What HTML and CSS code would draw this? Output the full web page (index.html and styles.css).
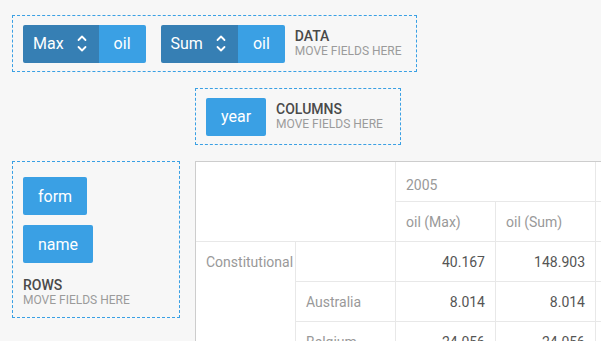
FILE: index.html
```html
<!DOCTYPE html>
<html lang="en">
    <head>
        <meta charset="UTF-8">
        <meta name="viewport" content="width=device-width, initial-scale=1.0">
        <title>Pivot</title>
        <link rel="stylesheet" href="styles.css">
    </head>
    <body>
        <div class="pivot">
            <div class="zone data-zone">
                <div class="field">
                    <span class="agg">Max
                        <svg class="arrows" width="10" height="17" viewBox="0 0 10 17"><polyline points="1.5,5 5,1.5 8.5,5"/><polyline points="1.5,12 5,15.5 8.5,12"/></svg>
                    </span>
                    <span class="name">oil</span>
                </div>
                <div class="field">
                    <span class="agg">Sum
                        <svg class="arrows" width="10" height="17" viewBox="0 0 10 17"><polyline points="1.5,5 5,1.5 8.5,5"/><polyline points="1.5,12 5,15.5 8.5,12"/></svg>
                    </span>
                    <span class="name">oil</span>
                </div>
                <div class="label">
                    <b>DATA</b>
                    <span>MOVE FIELDS HERE</span>
                </div>
            </div>

            <div class="middle">
                <div class="zone cols-zone">
                    <div class="field"><span class="name">year</span></div>
                    <div class="label">
                        <b>COLUMNS</b>
                        <span>MOVE FIELDS HERE</span>
                    </div>
                </div>
            </div>

            <div class="bottom">
                <div class="zone rows-zone">
                    <div class="field"><span class="name">form</span></div>
                    <div class="field"><span class="name">name</span></div>
                    <div class="label">
                        <b>ROWS</b>
                        <span>MOVE FIELDS HERE</span>
                    </div>
                </div>

                <table class="grid">
                    <tr class="head">
                        <td class="corner" colspan="2" rowspan="2"></td>
                        <td class="year" colspan="2">2005</td>
                        <td class="year" colspan="2">2006</td>
                    </tr>
                    <tr class="head">
                        <td>oil (Max)</td>
                        <td>oil (Sum)</td>
                        <td>oil (Max)</td>
                        <td>oil (Sum)</td>
                    </tr>
                    <tr>
                        <td class="rh group" rowspan="4">Constitutional</td>
                        <td class="rh"></td>
                        <td class="num">40.167</td>
                        <td class="num">148.903</td>
                        <td class="num">41.020</td>
                        <td class="num">150.117</td>
                    </tr>
                    <tr>
                        <td class="rh">Australia</td>
                        <td class="num">8.014</td>
                        <td class="num">8.014</td>
                        <td class="num">8.120</td>
                        <td class="num">8.120</td>
                    </tr>
                    <tr>
                        <td class="rh">Belgium</td>
                        <td class="num">24.056</td>
                        <td class="num">24.056</td>
                        <td class="num">24.300</td>
                        <td class="num">24.300</td>
                    </tr>
                </table>
            </div>
        </div>
    </body>
</html>
```

FILE: styles.css
```css
*{
    margin: 0;
    padding: 0;
    box-sizing: border-box;
}

body{
    width: 601px;
    height: 341px;
    overflow: hidden;
    background-color: #f7f7f7;
    font-family: Roboto, "Liberation Sans", sans-serif;
}

.pivot{
    padding: 15px 0 0 12px;
    width: 900px;
}

.zone{
    border: 1px dashed #3aa0e4;
}

.data-zone,
.cols-zone{
    display: inline-flex;
    align-items: center;
    height: 57px;
    padding: 0 14px 0 10px;
}

.cols-zone{
    padding-right: 17px;
}

.data-zone .field + .field{
    margin-left: 15px;
}

.middle{
    padding: 16px 0 16px 183px;
}

.field{
    display: flex;
    height: 38px;
    border-radius: 2px;
    overflow: hidden;
    color: #fff;
    font-size: 16px;
}

.field .agg{
    display: flex;
    align-items: center;
    gap: 13px;
    padding: 0 12px 0 10px;
    background: #367fb4;
}

.field .name{
    display: flex;
    align-items: center;
    padding: 0 15px;
    background: #3aa0e4;
}

.arrows polyline{
    fill: none;
    stroke: #fff;
    stroke-width: 1.8;
    stroke-linecap: round;
    stroke-linejoin: round;
}

.label{
    display: flex;
    flex-direction: column;
    margin-left: 10px;
}

.label b{
    font-size: 14px;
    line-height: 15px;
    font-weight: 500;
    color: #4a4a4a;
}

.label span{
    font-size: 12px;
    line-height: 14px;
    color: #9b9b9b;
}

.bottom{
    display: flex;
    align-items: flex-start;
}

.rows-zone{
    width: 168px;
    height: 157px;
    padding: 15px 10px 10px;
    display: flex;
    flex-direction: column;
    align-items: flex-start;
}

.rows-zone .field + .field{
    margin-top: 10px;
}

.rows-zone .label{
    margin: 15px 0 0;
}

.grid{
    margin-left: 15px;
    border-collapse: separate;
    border-spacing: 0;
    background: #fff;
    border-top: 1px solid #cdcdcd;
    border-left: 1px solid #cdcdcd;
    font-size: 14px;
    color: #999;
}

.grid td{
    width: 100px;
    min-width: 100px;
    height: 40px;
    padding: 0 10px;
    border-right: 1px solid #e8e8e8;
    border-bottom: 1px solid #e8e8e8;
    white-space: nowrap;
    vertical-align: middle;
}

.grid .year{
    padding-top: 6px;
}

.grid .group{
    vertical-align: top;
    padding: 12px 0 0 10px;
}

.grid .num{
    text-align: right;
    color: #555;
}
```
